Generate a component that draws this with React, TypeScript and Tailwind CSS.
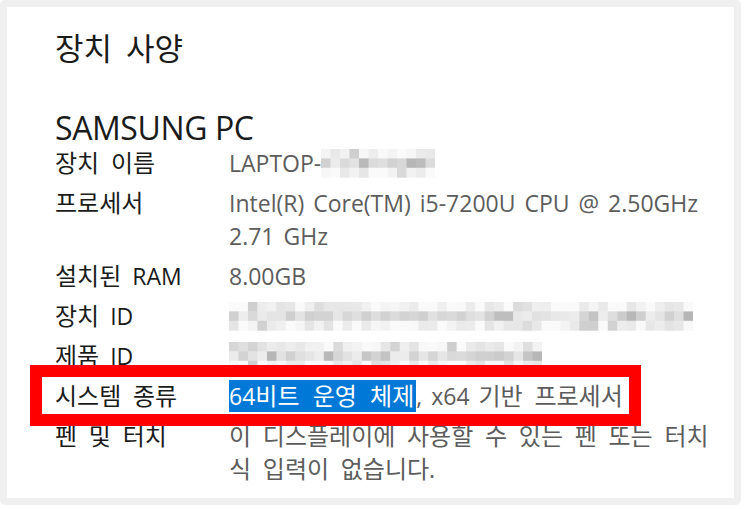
import type { ReactNode } from "react";

const font = "[font-family:'Open_Sans','Noto_Sans_CJK_KR',sans-serif]";

function rng(seed: number) {
  let s = seed;
  return () => {
    s = (s * 9301 + 49297) % 233280;
    return s / 233280;
  };
}

// hangul runs get a slightly larger size so they match the original Malgun Gothic widths
function mix(text: string, hangulClass = "text-[24px] leading-none [word-spacing:5.5px]") {
  const parts = text.split(/([\uAC00-\uD7A3]+(?:\s+[\uAC00-\uD7A3]+)*)/);
  return parts.map((p, i) =>
    /[\uAC00-\uD7A3]/.test(p) ? (
      <span key={i} className={hangulClass}>
        {p}
      </span>
    ) : (
      p
    ),
  );
}

function Mosaic({ cols, seed, width }: { cols: number; seed: number; width: number }) {
  const rand = rng(seed);
  const rows = 3;
  const cw = width / cols;
  const ch = 9.4;
  const cells = [];
  for (let r = 0; r < rows; r++) {
    for (let c = 0; c < cols; c++) {
      const base = r === 1 ? 205 : 228;
      const v = Math.round(base + rand() * 32 - (rand() > 0.8 ? 25 : 0));
      const g = Math.min(250, v);
      cells.push(
        <rect key={`${r}-${c}`} x={c * cw} y={r * ch} width={cw + 0.5} height={ch + 0.5} fill={`rgb(${g},${g},${g})`} />,
      );
    }
  }
  return (
    <svg width={width} height={rows * ch} className="inline-block align-middle">
      {cells}
    </svg>
  );
}

function Row({ label, children }: { label: string; children: ReactNode }) {
  return (
    <div className="flex">
      <div className="w-[174px] shrink-0 text-[#1b1b1b] [word-spacing:5px]">{mix(label)}</div>
      <div className="text-[#5c5c5c] [word-spacing:3px]">{children}</div>
    </div>
  );
}

export default function App() {
  return (
    <div className={`h-[509px] w-[744px] bg-white ${font}`}>
      <div className="h-[505px] w-[741px] rounded-[5px] border-[7px] border-[#f0f0f0] bg-white pl-[48px] pt-[21px]">
        <h1 className="text-[31px] leading-[40px] text-[#1b1b1b] [word-spacing:6px]">장치 사양</h1>
        <h2 className="mt-[41px] text-[32px] leading-[38px] tracking-[-0.4px] text-[#1b1b1b]">SAMSUNG PC</h2>

        <div className="flex flex-col gap-[7px] text-[23px] leading-[33px]">
          <Row label="장치 이름">
            <span className="flex h-[33px] items-center">
              LAPTOP-
              <Mosaic cols={12} seed={7} width={114} />
            </span>
          </Row>
          <Row label="프로세서">
            Intel(R) Core(TM) i5-7200U CPU @ 2.50GHz
            <br />
            2.71 GHz
          </Row>
          <Row label="설치된 RAM">8.00GB</Row>
          <Row label="장치 ID">
            <span className="flex h-[33px] items-center">
              <Mosaic cols={49} seed={13} width={464} />
            </span>
          </Row>
          <Row label="제품 ID">
            <span className="flex h-[33px] items-center">
              <Mosaic cols={33} seed={29} width={313} />
            </span>
          </Row>
          <div className="relative">
            <Row label="시스템 종류">
              <span className="inline-block bg-[#0078d7] pr-[2px] leading-[32px] text-white">
                {mix("64비트 운영 체제", "text-[24px] leading-none [word-spacing:7px]")}
              </span>
              , {mix("x64 기반 프로세서")}
            </Row>
            <div className="absolute -left-[25px] -top-[15px] h-[61px] w-[611px] border-[12px] border-[#ff0000]" />
          </div>
          <Row label="펜 및 터치">
            {mix("이 디스플레이에 사용할 수 있는 펜 또는 터치")}
            <br />
            {mix("식 입력이 없습니다.")}
          </Row>
        </div>
      </div>
    </div>
  );
}
